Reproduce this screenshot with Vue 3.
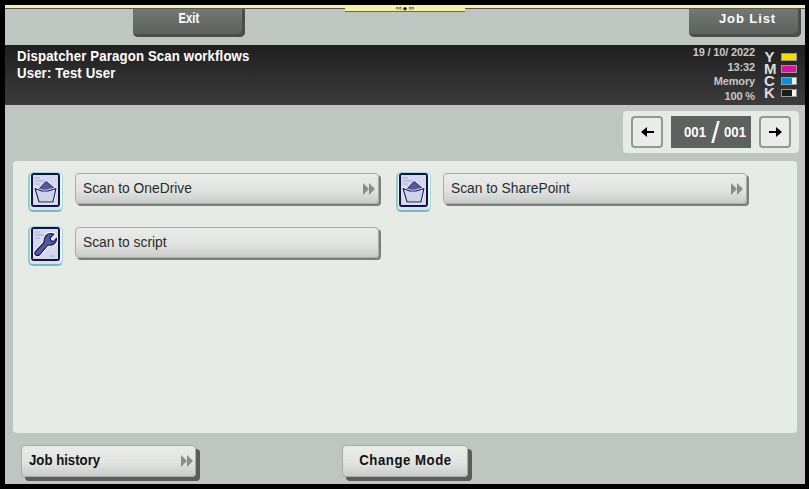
<template>
  <div class="screen">
    <div class="strip">
      <div class="handle">
        <span class="handle-mark">&lt;&lt; ◆ &gt;&gt;</span>
      </div>
    </div>

    <div class="tabs">
      <button class="tab"><span class="squeeze">Exit</span></button>
      <button class="tab spaced">Job List</button>
    </div>

    <header class="status">
      <div class="title">
        <div class="squeeze title-line">Dispatcher Paragon Scan workflows</div>
        <div class="squeeze title-line">User: Test User</div>
      </div>
      <div class="info">
        <div>19 / 10/ 2022</div>
        <div>13:32</div>
        <div>Memory</div>
        <div>100 %</div>
      </div>
      <div class="toners">
        <div v-for="t in toners" :key="t.name" class="toner">
          <span class="toner-name">{{ t.name }}</span>
          <span class="toner-bar"><span class="toner-fill" :style="{ width: t.level + '%', background: t.color }"></span></span>
        </div>
      </div>
    </header>

    <div class="pager-row">
      <div class="pager">
        <button class="page-btn">
          <svg width="13" height="10" viewBox="0 0 13 10"><path d="M5 5h8" stroke="#000" stroke-width="2"/><path d="M0 5l6-5v10z" fill="#000"/></svg>
        </button>
        <div class="page-num">
          <span class="squeeze">001</span>
          <span class="slash">/</span>
          <span class="squeeze">001</span>
        </div>
        <button class="page-btn">
          <svg width="13" height="10" viewBox="0 0 13 10"><path d="M0 5h8" stroke="#000" stroke-width="2"/><path d="M13 5L7 0v10z" fill="#000"/></svg>
        </button>
      </div>
    </div>

    <main class="panel">
      <div class="grid">
        <div v-for="item in workflows" :key="item.label" class="entry">
          <div class="icon-frame">
            <svg width="25" height="30" viewBox="0 0 25 30">
              <rect width="25" height="30" fill="#d6d9ec"/>
              <path d="M2 3h5M2 6h9M2 9h5M17 27h5" stroke="#a4aad4" stroke-width="1"/>
              <template v-if="item.icon === 'box'">
                <path d="M5 15L13 6.500l8 6.500 .5 4L8 18z" fill="#5358aa" stroke="#2a2d70" stroke-width="1" stroke-linejoin="round"/>
                <path d="M2 13.500l7 2.500h6l8-2.500-3 13.500H6z" fill="#cfd2e8" stroke="#fff" stroke-width="2.600" stroke-linejoin="round"/>
                <path d="M2 13.500l7 2.500h6l8-2.500-3 13.500H6z" fill="#cfd2e8" stroke="#14164a" stroke-width="1.100" stroke-linejoin="round"/>
              </template>
              <template v-else>
                <path d="M2.500 22.500L11 13.500C10.500 9 13 4.500 18 4.500c1 0 2 .2 3 .7L17 9l1 2.500 2.500 1 3-3.500c.5 5-3.500 8-8.500 7L7 25.500C4 28 0 25.500 2.500 22.500z" fill="#5358a4" stroke="#fff" stroke-width="3" stroke-linejoin="round"/>
                <path d="M2.500 22.500L11 13.500C10.500 9 13 4.500 18 4.500c1 0 2 .2 3 .7L17 9l1 2.500 2.500 1 3-3.500c.5 5-3.500 8-8.500 7L7 25.500C4 28 0 25.500 2.500 22.500z" fill="#5358a4" stroke="#14164a" stroke-width="1.100" stroke-linejoin="round"/>
              </template>
            </svg>
          </div>
          <button class="btn row-btn">
            <span>{{ item.label }}</span>
            <span v-if="item.arrow" class="chevrons"><i></i><i></i></span>
          </button>
        </div>
      </div>
    </main>

    <footer class="bottom">
      <button class="btn foot-btn history">
        <span class="squeeze">Job history</span>
        <span class="chevrons"><i></i><i></i></span>
      </button>
      <button class="btn foot-btn mode"><span class="squeeze mid">Change Mode</span></button>
    </footer>
  </div>
</template>

<script setup>
const toners = [
  { name: 'Y', level: 100, color: '#f2df00' },
  { name: 'M', level: 100, color: '#e0109c' },
  { name: 'C', level: 72, color: '#0a8fdc' },
  { name: 'K', level: 72, color: '#1a1a1a' }
]

const workflows = [
  { label: 'Scan to OneDrive', icon: 'box', arrow: true },
  { label: 'Scan to SharePoint', icon: 'box', arrow: true },
  { label: 'Scan to script', icon: 'tool', arrow: false }
]
</script>

<style>
html, body {
  background: #000;
  overflow: hidden;
}
</style>

<style scoped>
.screen {
  box-sizing: border-box;
  width: 809px;
  height: 489px;
  padding: 5px 4px 5px 5px;
  display: flex;
  flex-direction: column;
  font-family: "Liberation Sans", Arial, sans-serif;
}

button {
  font-family: inherit;
  padding: 0;
  border: none;
}

/* the device font is a narrow bitmap, so the bold labels get squeezed */
.squeeze {
  display: inline-block;
  transform: scaleX(0.88);
  transform-origin: left center;
  white-space: nowrap;
}

.squeeze.mid {
  transform-origin: center;
}

.strip {
  position: relative;
  height: 4px;
  flex: none;
  background: #f6f1a6;
  border-bottom: 1px solid #555;
  box-sizing: border-box;
}

.handle {
  position: absolute;
  left: 340px;
  top: 0;
  width: 120px;
  height: 6px;
  background: #f6f1a6;
  border-bottom: 1px solid #666;
  display: flex;
  justify-content: center;
}

.handle-mark {
  font-size: 5px;
  line-height: 6px;
  font-weight: 700;
  color: #222;
}

.tabs {
  height: 36px;
  flex: none;
  background: #bfc5c0;
  display: flex;
  justify-content: space-between;
  padding: 0 4px 8px 128px;
  box-sizing: border-box;
}

.tab {
  width: 112px;
  height: 28px;
  border-radius: 0 0 5px 5px;
  background: linear-gradient(#737874, #5b5f5c);
  box-shadow: inset -3px -3px 0 #4b4e4c;
  color: #fff;
  font-size: 14px;
  font-weight: 700;
  padding-bottom: 10px;
}

.tab .squeeze {
  transform: scaleX(0.8);
  transform-origin: center;
}

.tab.spaced {
  font-size: 13px;
  letter-spacing: 0.9px;
  padding-left: 5px;
}

.status {
  height: 60px;
  flex: none;
  background: linear-gradient(#1f1f1f, #3c3c3c);
  color: #fff;
  display: flex;
  box-sizing: border-box;
  padding: 2px 8px 0 12px;
}

.title {
  flex: 1;
  font-size: 15px;
  line-height: 17px;
  font-weight: 700;
  letter-spacing: 0.15px;
}

.title-line {
  display: block;
}

.info {
  text-align: right;
  font-size: 11px;
  line-height: 14.500px;
  font-weight: 700;
  color: #c8c8c8;
  padding-right: 9px;
  margin-top: -2px;
  letter-spacing: -0.15px;
}

.toners {
  display: flex;
  flex-direction: column;
  padding-top: 4px;
}

.toner {
  display: flex;
  align-items: center;
  height: 12px;
  gap: 6px;
}

.toner-name {
  width: 11px;
  text-align: center;
  font-size: 15px;
  line-height: 12px;
  font-weight: 700;
  color: #ddd;
}

.toner-bar {
  width: 16px;
  height: 8px;
  box-sizing: border-box;
  border: 1px solid #999;
  background: #f2f2f2;
  display: block;
}

.toner-fill {
  display: block;
  height: 100%;
}

.pager-row {
  flex: none;
  height: 56px;
  background: #bfc5c0;
  display: flex;
  justify-content: flex-end;
  padding: 6px 6px 0 0;
  box-sizing: border-box;
}

.pager {
  width: 176px;
  height: 42px;
  border-radius: 4px;
  background: #e6ebe6;
  box-sizing: border-box;
  padding: 5px 8px;
  display: flex;
  justify-content: space-between;
}

.page-btn {
  width: 32px;
  height: 32px;
  box-sizing: border-box;
  border: 2px solid #959995;
  border-radius: 4px;
  background: #e9ece9;
  display: flex;
  align-items: center;
  justify-content: center;
}

.page-num {
  width: 80px;
  height: 32px;
  box-sizing: border-box;
  padding-left: 13px;
  background: #5d625e;
  color: #fff;
  font-size: 15px;
  font-weight: 700;
  line-height: 32px;
  display: flex;
}

.page-num .squeeze {
  width: 23px;
}

.slash {
  width: 17px;
  text-align: center;
  font-size: 30px;
  font-weight: 400;
  line-height: 34px;
}

.panel {
  flex: 1;
  background: #bfc5c0;
  padding: 0 8px;
  display: flex;
  min-height: 0;
}

.grid {
  flex: 1;
  background: #e6ebe6;
  border-radius: 4px;
  display: grid;
  grid-template-columns: 368px 368px;
  grid-auto-rows: 54px;
  align-content: start;
  padding: 12px 0 0 15px;
}

.entry {
  display: flex;
  align-items: flex-start;
  gap: 12px;
}

.icon-frame {
  width: 35px;
  height: 40px;
  flex: none;
  box-sizing: border-box;
  border-radius: 5px;
  background: #f1f3f1;
  border: 1px solid #a5d8da;
  border-bottom: 2px solid #6fbcc4;
  border-left: 2px solid #8fcdd2;
  padding: 0 0 0 1px;
  margin-top: -1px;
  box-shadow: inset 0 -3px 0 #dfe2df;
}

.icon-frame svg {
  display: block;
  border: 2px solid #10124a;
  border-radius: 3px;
}

.btn {
  box-sizing: border-box;
  display: flex;
  align-items: center;
  justify-content: space-between;
  border: 1px solid #a9ada9;
  border-radius: 4px;
  background: linear-gradient(#e9ece9, #e1e4e1 55%, #c9cdc9);
  color: #111;
}

.row-btn {
  width: 304px;
  height: 31px;
  padding: 0 3px 0 7px;
  font-size: 13.800px;
  color: #2a2a2a;
  box-shadow: 2px 2px 0 #7b7f7b;
}

.chevrons {
  display: flex;
}

.chevrons i {
  width: 0;
  height: 0;
  border-top: 6px solid transparent;
  border-bottom: 6px solid transparent;
  border-left: 6.500px solid #8a8e8a;
}

.bottom {
  flex: none;
  height: 51px;
  background: #bfc5c0;
  display: flex;
  padding: 12px 0 0 16px;
  box-sizing: border-box;
}

.foot-btn {
  height: 32px;
  font-size: 15px;
  font-weight: 700;
  box-shadow: 4px 4px 0 #5a5d5a;
  padding-bottom: 3px;
}

.history {
  width: 175px;
  padding-left: 7px;
  padding-right: 2px;
}

.history .chevrons {
  margin-top: 3px;
}

.mode {
  width: 126px;
  margin-left: 146px;
  justify-content: center;
  letter-spacing: 0.6px;
}
</style>
